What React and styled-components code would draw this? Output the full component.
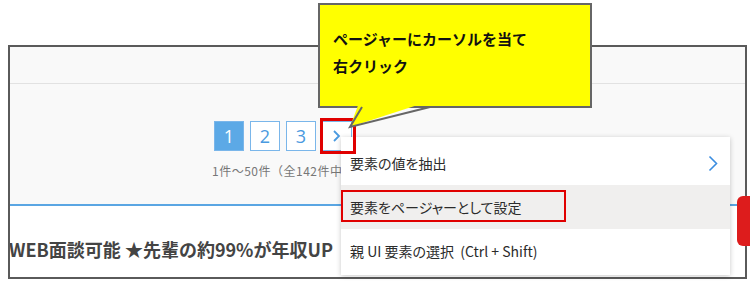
import React from "react";
import styled, { createGlobalStyle } from "styled-components";

const GlobalStyle = createGlobalStyle`
  html, body {
    margin: 0;
    padding: 0;
    background: #ffffff;
    font-family: "Noto Sans CJK JP", "Noto Sans", sans-serif;
  }
`;

const Stage = styled.div`
  position: relative;
  width: 750px;
  height: 284px;
  overflow: hidden;
  padding-top: 45px;
  box-sizing: border-box;
`;

const Frame = styled.div`
  margin-left: 8px;
  width: 739px;
  height: 234px;
  box-sizing: border-box;
  border: 2px solid #5a5a5a;
  background: #f9f9f9;
  display: flex;
  flex-direction: column;
  overflow: hidden;
`;

const Header = styled.div`
  height: 36px;
  border-bottom: 1px solid #e2e2e2;
`;

const PagerArea = styled.div`
  height: 122px;
  box-sizing: border-box;
  padding: 37px 0 0 204px;
  border-bottom: 2px solid #5aa6e3;
`;

const Pager = styled.div`
  display: flex;
  gap: 6px;
`;

const PageBox = styled.div`
  width: 30px;
  height: 30px;
  box-sizing: border-box;
  border: 1px solid #7ab6ea;
  background: ${(p) => (p.$active ? "#5ca9e6" : "#ffffff")};
  color: ${(p) => (p.$active ? "#ffffff" : "#4a9ae0")};
  font-family: "Open Sans", "Noto Sans", sans-serif;
  font-size: 18px;
  display: flex;
  align-items: center;
  justify-content: center;
`;

const Count = styled.div`
  margin: 12px 0 0 -2px;
  font-size: 12px;
  line-height: 16px;
  letter-spacing: 0.5px;
  color: #777777;
  white-space: nowrap;
`;

const TitleArea = styled.div`
  flex: 1;
  background: #ffffff;
  padding-top: 31px;
`;

const Title = styled.div`
  font-size: 18px;
  line-height: 24px;
  font-weight: 700;
  color: #444444;
  white-space: nowrap;
  margin-left: -1px;
`;

const Callout = styled.div`
  position: absolute;
  left: 318px;
  top: 3px;
  width: 274px;
  height: 105px;
  box-sizing: border-box;
  border: 2px solid #666666;
  background: #ffff00;
  padding: 20px 0 0 13px;
  z-index: 5;
`;

const CalloutLine = styled.div`
  font-size: 15px;
  line-height: 27px;
  font-weight: 700;
  color: #111111;
  white-space: nowrap;
`;

const Tail = styled.svg`
  position: absolute;
  left: 345px;
  top: 100px;
  z-index: 6;
`;

const Highlight = styled.div`
  position: absolute;
  left: ${(p) => p.$x}px;
  top: ${(p) => p.$y}px;
  width: ${(p) => p.$w}px;
  height: ${(p) => p.$h}px;
  box-sizing: border-box;
  border: ${(p) => p.$t}px solid #e00000;
  z-index: 4;
`;

const Menu = styled.div`
  position: absolute;
  left: 341px;
  top: 137px;
  width: 389px;
  padding: 4px 0 2px;
  background: #ffffff;
  box-shadow: 0 1px 5px rgba(0, 0, 0, 0.22);
  z-index: 3;
`;

const MenuItem = styled.div`
  height: 44px;
  display: flex;
  align-items: center;
  justify-content: space-between;
  padding: 0 12px 0 9px;
  background: ${(p) => (p.$hover ? "#f0efee" : "transparent")};
  font-size: 14px;
  color: #2b2b2b;
  font-feature-settings: "palt";
  white-space: pre;
`;

const SideTab = styled.div`
  position: absolute;
  left: 737px;
  top: 196px;
  width: 20px;
  height: 50px;
  border-radius: 6px 0 0 6px;
  background: #dd1c1c;
  z-index: 2;
`;

const Chevron = () => (
  <svg width="10" height="17" viewBox="0 0 10 17">
    <polyline points="1.5,1.5 8.5,8.5 1.5,15.5" fill="none" stroke="#3b8de0" strokeWidth="1.6" />
  </svg>
);

export default function App() {
  return (
    <Stage>
      <GlobalStyle />
      <Frame>
        <Header />
        <PagerArea>
          <Pager>
            <PageBox $active>1</PageBox>
            <PageBox>2</PageBox>
            <PageBox>3</PageBox>
            <PageBox>
              <svg width="10" height="14" viewBox="0 0 10 14">
                <polyline points="2,2 7,7 2,12" fill="none" stroke="#4a9ae0" strokeWidth="1.8" />
              </svg>
            </PageBox>
          </Pager>
          <Count>1件～50件（全142件中</Count>
        </PagerArea>
        <TitleArea>
          <Title>WEB面談可能 ★先輩の約99%が年収UP</Title>
        </TitleArea>
      </Frame>

      <Highlight $x={320} $y={118} $w={36} $h={36} $t={3} />

      <Callout>
        <CalloutLine>ページャーにカーソルを当て</CalloutLine>
        <CalloutLine>右クリック</CalloutLine>
      </Callout>
      <Tail width="90" height="32" viewBox="0 0 90 32">
        <polygon points="15,0 5,27 88,0" fill="#ffff00" />
        <polyline points="17,7 5,27 85,7" fill="none" stroke="#666666" strokeWidth="2" />
      </Tail>

      <Menu>
        <MenuItem>
          <span>要素の値を抽出</span>
          <Chevron />
        </MenuItem>
        <MenuItem $hover>
          <span>要素をページャーとして設定</span>
        </MenuItem>
        <MenuItem>
          <span>親 UI 要素の選択  (Ctrl + Shift)</span>
        </MenuItem>
      </Menu>
      <Highlight $x={341} $y={190} $w={225} $h={32} $t={2} />

      <SideTab />
    </Stage>
  );
}
